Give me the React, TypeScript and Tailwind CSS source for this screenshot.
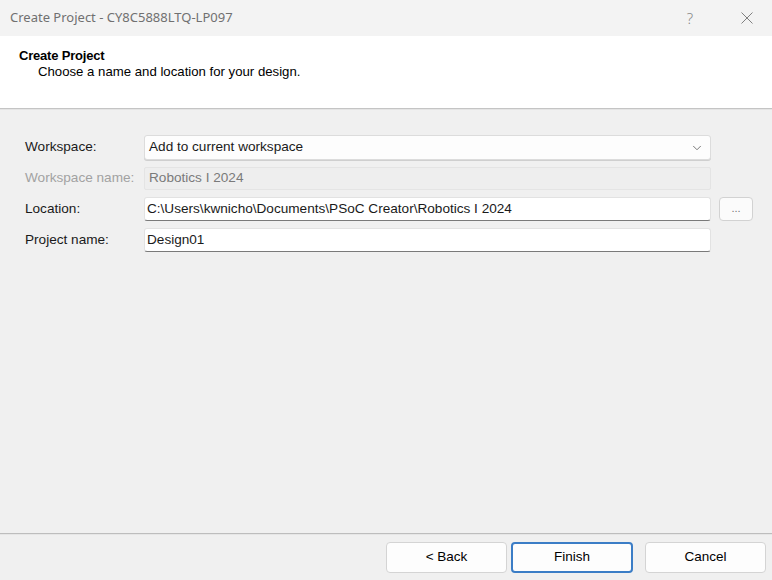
import { ChevronDown } from 'lucide-react';

const ui = { fontFamily: '"Liberation Sans", Arial, sans-serif' };

export default function App() {
    return (
        <div className="w-[772px] h-[580px] flex flex-col bg-[#f0f0f0] overflow-hidden text-[13px] text-[#1a1a1a]" style={ui}>
            {/* Title bar */}
            <div className="h-[36px] shrink-0 bg-[#f3f3f3] flex items-center pl-[10px]">
                <span className="text-[13px] text-[#707070]" style={{ fontFamily: '"Noto Sans", "Open Sans", sans-serif' }}>
                    Create Project - CY8C5888LTQ-LP097
                </span>
                <span className="ml-auto mr-[1px] w-[20px] text-center text-[15px] font-light text-[#888]" style={{ fontFamily: '"Noto Sans", sans-serif' }}>
                    ?
                </span>
                <svg className="ml-[40px] mr-[19px]" width="12" height="12" viewBox="0 0 12 12">
                    <path d="M0.5 0.5 L11.5 11.5 M11.5 0.5 L0.5 11.5" stroke="#808080" strokeWidth="1" fill="none" />
                </svg>
            </div>

            {/* Wizard header */}
            <div className="h-[72px] shrink-0 bg-white pl-[19px] pt-[12px]">
                <div className="font-bold text-[13px] leading-[16px] text-black tracking-[-0.2px]">Create Project</div>
                <div className="pl-[19px] leading-[16px] text-[13.2px] text-black">Choose a name and location for your design.</div>
            </div>
            <div className="h-[2px] shrink-0 bg-[#c4c4c4] border-b border-[#e4e4e4]" />

            {/* Form */}
            <div className="flex-1 pt-[25px] pl-[25px] pr-[19px] text-[13.6px]">
                <div className="grid grid-cols-[119px_567px_auto] gap-y-[7px] items-center">
                    <div>Workspace:</div>
                    <div className="h-[25px] bg-[#fdfdfd] border border-[#dcdcdc] rounded-[3px] flex items-center pl-[4px] pr-[6px] shadow-[0_1px_0_#cfcfcf]">
                        <span>Add to current workspace</span>
                        <ChevronDown className="ml-auto w-[14px] h-[14px] text-[#666]" strokeWidth={1.5} />
                    </div>
                    <div />

                    <div className="text-[#a2a2a2]">Workspace name:</div>
                    <div className="h-[23px] bg-[#eeeeee] border border-[#e4e4e4] rounded-[2px] flex items-center pl-[4px] text-[#7a7a7a]">
                        Robotics I 2024
                    </div>
                    <div />

                    <div>Location:</div>
                    <div className="h-[24px] bg-white border border-[#e2e2e2] border-b-[#7a7a7a] rounded-[3px] flex items-center pl-[2px]">
                        C:\Users\kwnicho\Documents\PSoC Creator\Robotics I 2024
                    </div>
                    <div className="ml-[8px] w-[34px] h-[24px] bg-[#fbfbfb] border border-[#d2d2d2] rounded-[4px] flex items-center justify-center text-[#777] text-[11px] leading-none pb-[2px]">
                        ...
                    </div>

                    <div>Project name:</div>
                    <div className="h-[24px] bg-white border border-[#e2e2e2] border-b-[#7a7a7a] rounded-[3px] flex items-center pl-[2px]">
                        Design01
                    </div>
                    <div />
                </div>
            </div>

            {/* Footer */}
            <div className="h-[2px] shrink-0 bg-[#bdbdbd] border-b border-[#e6e6e6]" />
            <div className="h-[45px] shrink-0 flex items-start justify-end pt-[7px] pr-[6px] text-[13.5px]">
                <button className="w-[121px] h-[31px] bg-[#fdfdfd] border border-[#d4d4d4] rounded-[4px] text-black">
                    &lt; Back
                </button>
                <button className="ml-[4px] w-[122px] h-[31px] bg-[#fdfdfd] border-2 border-[#3b7dc6] rounded-[4px] text-black">
                    Finish
                </button>
                <button className="ml-[12px] w-[121px] h-[31px] bg-[#fdfdfd] border border-[#d4d4d4] rounded-[4px] text-black">
                    Cancel
                </button>
            </div>
        </div>
    );
}
